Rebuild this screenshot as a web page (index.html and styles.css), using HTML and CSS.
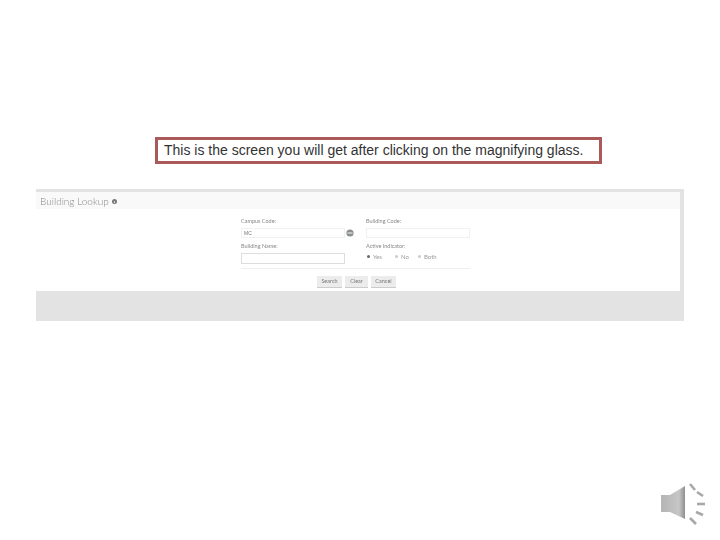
FILE: index.html
```html
<!DOCTYPE html>
<html lang="en">
<head>
  <meta charset="UTF-8"/>
  <title>Building Lookup</title>
  <link rel="stylesheet" href="styles.css">
</head>
<body>
  <div class="slide">
    <!-- callout -->
    <div class="callout">This is the screen you will get after clicking on the magnifying glass.</div>

    <!-- lookup screenshot -->
    <div class="lookup">
      <div class="lookup-card">
        <div class="lookup-head">
          <span class="lookup-title">Building Lookup</span>
          <svg class="info-dot" width="5" height="5" viewBox="0 0 5 5"><circle cx="2.5" cy="2.5" r="2.5" fill="#777"/><rect x="2" y="2" width="1" height="2" fill="#ddd"/></svg>
        </div>
        <div class="lookup-form">
          <div class="form-grid">
            <div class="field">
              <label class="field-label">Campus Code:</label>
              <div class="input-row">
                <div class="input input-flat">MC</div>
                <svg class="search-icon" width="8" height="8" viewBox="0 0 8 8"><circle cx="4" cy="4" r="3.6" fill="#8a8f8f"/><rect x="1.5" y="3.4" width="5" height="1.2" fill="#e4e4e4"/></svg>
              </div>
            </div>
            <div class="field">
              <label class="field-label">Building Code:</label>
              <div class="input input-flat"></div>
            </div>
            <div class="field">
              <label class="field-label">Building Name:</label>
              <div class="input"></div>
            </div>
            <div class="field">
              <label class="field-label">Active Indicator:</label>
              <div class="radios">
                <span class="radio radio-yes"><i class="dot dot-on"></i>Yes</span>
                <span class="radio radio-no"><i class="dot"></i>No</span>
                <span class="radio"><i class="dot"></i>Both</span>
              </div>
            </div>
          </div>
          <div class="buttons">
            <div class="btn btn-search">Search</div>
            <div class="btn btn-clear">Clear</div>
            <div class="btn btn-cancel">Cancel</div>
          </div>
        </div>
      </div>
    </div>

    <!-- audio icon -->
    <div class="audio">
      <svg width="50" height="50" viewBox="0 0 50 50">
        <defs>
          <linearGradient id="cone" x1="0" y1="0" x2="1" y2="0">
            <stop offset="0" stop-color="#b4b4b4"/>
            <stop offset="0.75" stop-color="#c6c6c6"/>
            <stop offset="1" stop-color="#8e8e8e"/>
          </linearGradient>
        </defs>
        <path d="M0 15 H9 L24 6 V39 L9 32 H0 Z" fill="url(#cone)"/>
        <g stroke="#a8a8a8" stroke-width="2.6" fill="none">
          <path d="M29 4 L34 10"/>
          <path d="M36 12 L42 16"/>
          <path d="M36 24 L44 24"/>
          <path d="M35 32 L42 35"/>
          <path d="M29 38 L35 44"/>
        </g>
      </svg>
    </div>
  </div>
</body>
</html>
```

FILE: styles.css
```css
body {
  margin: 0;
  background-color: #fff;
  font-family: "Liberation Sans", Arial, sans-serif;
}

.slide {
  width: 720px;
  height: 540px;
  overflow: hidden;
  display: flex;
  flex-direction: column;
  padding-top: 137px;
  box-sizing: border-box;
}

/* callout */
.callout {
  width: 447px;
  height: 27px;
  margin-left: 155px;
  padding-left: 6px;
  box-sizing: border-box;
  border: 3px solid #ab5a5a;
  font-size: 14px;
  line-height: 21px;
  color: #333;
  white-space: nowrap;
}

/* lookup screenshot */
.lookup {
  width: 648px;
  height: 132px;
  margin: 25px 0 0 36px;
  padding: 3px 4px 30px 0;
  box-sizing: border-box;
  background-color: #e3e3e3;
}

.lookup-card {
  height: 99px;
  background-color: #fff;
}

.lookup-head {
  display: flex;
  align-items: center;
  gap: 3px;
  height: 17px;
  padding-left: 4px;
  background-color: #f9f9f9;
}

.lookup-title {
  font-family: Lato, sans-serif;
  font-size: 10px;
  font-weight: 300;
  color: #888;
  white-space: nowrap;
  filter: blur(0.2px);
}

.info-dot {
  margin-top: 2px;
}

.lookup-form {
  width: 229px;
  margin-left: 205px;
  padding-top: 9px;
  filter: blur(0.3px);
}

.form-grid {
  display: grid;
  grid-template-columns: 104px 104px;
  column-gap: 21px;
  row-gap: 5px;
  padding-bottom: 4px;
  border-bottom: 1px solid #eee;
}

.field-label {
  display: block;
  height: 7px;
  margin-bottom: 3px;
  font-family: Lato, sans-serif;
  font-size: 5.5px;
  line-height: 7px;
  color: #888;
  white-space: nowrap;
}

.input-row {
  position: relative;
}

.search-icon {
  position: absolute;
  left: 105px;
  top: 1px;
}

.input {
  height: 11px;
  box-sizing: border-box;
  padding-left: 2px;
  border: 1px solid #ddd;
  font-size: 5px;
  line-height: 8px;
  color: #777;
}

.input-flat {
  height: 10px;
  border-color: #f1f1f1;
}

.radios {
  display: flex;
  align-items: center;
  height: 7px;
  font-family: Lato, sans-serif;
  font-size: 6px;
  color: #999;
}

.radio {
  display: flex;
  align-items: center;
  gap: 3px;
}

.radio-yes {
  width: 28px;
}

.radio-no {
  width: 23px;
}

.dot {
  width: 3px;
  height: 3px;
  margin-left: 1px;
  border-radius: 50%;
  background-color: #ccc;
}

.dot-on {
  background-color: #666;
}

.buttons {
  display: flex;
  justify-content: center;
  gap: 3px;
  margin-top: 7px;
  padding-left: 2px;
}

.btn {
  height: 12px;
  box-sizing: border-box;
  border-bottom: 1px solid #ccc;
  background-color: #ececec;
  font-family: Lato, sans-serif;
  font-size: 5.5px;
  line-height: 11px;
  text-align: center;
  color: #777;
}

.btn-search { width: 25px; }
.btn-clear { width: 23px; }
.btn-cancel { width: 25px; }

/* audio icon */
.audio {
  display: flex;
  justify-content: flex-end;
  margin-top: 159px;
  padding-right: 9px;
  filter: blur(0.5px);
}
```
